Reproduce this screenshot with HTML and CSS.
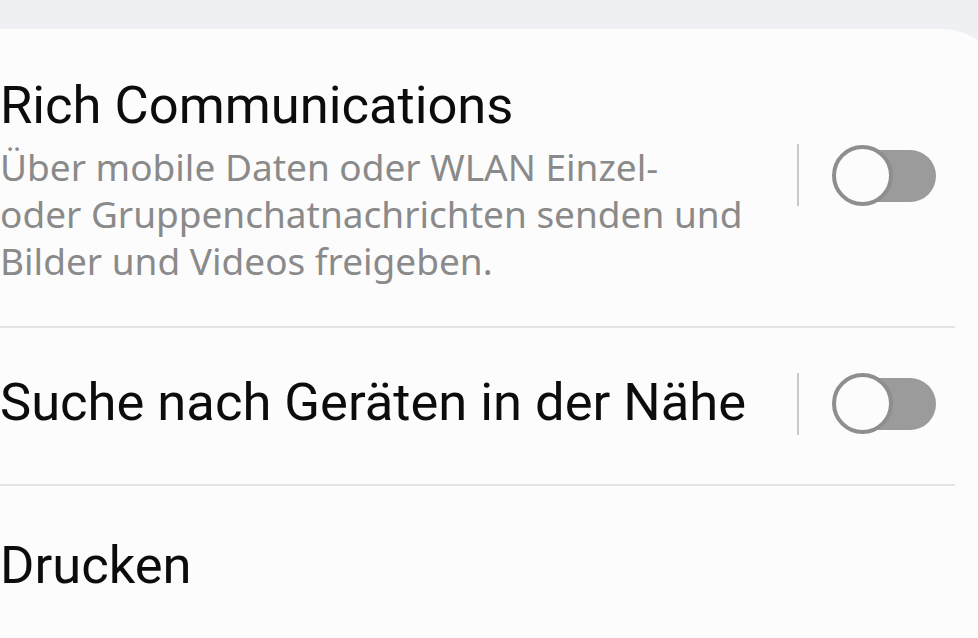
FILE: index.html
```html
<!DOCTYPE html>
<html lang="de">
<head>
<meta charset="utf-8">
<title>Weitere Verbindungseinstellungen</title>
<link rel="stylesheet" href="styles.css">
</head>
<body>
<div class="top-gap"></div>
<main class="card">
  <section class="row row-first">
    <div class="text">
      <div class="title">Rich Communications</div>
      <div class="summary">Über mobile Daten oder WLAN Einzel- oder Gruppenchatnachrichten senden und Bilder und Videos freigeben.</div>
    </div>
    <div class="control">
      <span class="sep"></span>
      <span class="switch"><span class="knob"></span></span>
    </div>
  </section>
  <div class="divider"></div>
  <section class="row row-second">
    <div class="text">
      <div class="title">Suche nach Geräten in der Nähe</div>
    </div>
    <div class="control">
      <span class="sep"></span>
      <span class="switch"><span class="knob"></span></span>
    </div>
  </section>
  <div class="divider"></div>
  <section class="row row-third">
    <div class="text">
      <div class="title">Drucken</div>
    </div>
  </section>
</main>
</body>
</html>
```

FILE: styles.css
```css
html, body {
  margin: 0;
  padding: 0;
}
body {
  background: #eff0f4;
  overflow: hidden;
  width: 978px;
  height: 638px;
  font-family: Roboto, "Liberation Sans", sans-serif;
}
.top-gap {
  height: 29px;
}
.card {
  background: #fcfcfc;
  margin-right: -33px;
  border-radius: 0 71px 71px 0;
  height: 620px;
}
.row {
  display: flex;
  align-items: center;
  padding-right: 75px;
}
.text {
  flex: 1;
  min-width: 0;
}
.title {
  font-size: 52.5px;
  line-height: 64px;
  color: #0c0c0c;
  white-space: nowrap;
}
.summary {
  margin-top: 6px;
  font-family: "Noto Sans", "Open Sans", sans-serif;
  font-size: 37px;
  line-height: 47px;
  color: #8a8a8a;
  width: 747px;
}
.row-first {
  height: 297px;
  box-sizing: border-box;
}
.row-first .text {
  padding-top: 2px;
}
.row-second {
  height: 156px;
}
.row-second .text {
  padding-bottom: 8px;
}
.row-third {
  padding-top: 47px;
}
.control {
  display: flex;
  align-items: center;
  margin-bottom: 5px;
}
.sep {
  width: 2px;
  height: 62px;
  background: #c9c9c9;
  margin-right: 33px;
}
.switch {
  position: relative;
  display: block;
  width: 104px;
  height: 61px;
}
.switch::before {
  content: "";
  position: absolute;
  left: 30px;
  right: 0;
  top: 5px;
  height: 52px;
  border-radius: 0 26px 26px 0;
  background: #9b9b9b;
}
.knob {
  position: absolute;
  left: 0;
  top: 0;
  width: 61px;
  height: 61px;
  box-sizing: border-box;
  border-radius: 50%;
  border: 4px solid #8e8e8e;
  background: #fcfcfc;
}
.divider {
  height: 2px;
  background: #e4e4e4;
  margin-right: 56px;
}
```
